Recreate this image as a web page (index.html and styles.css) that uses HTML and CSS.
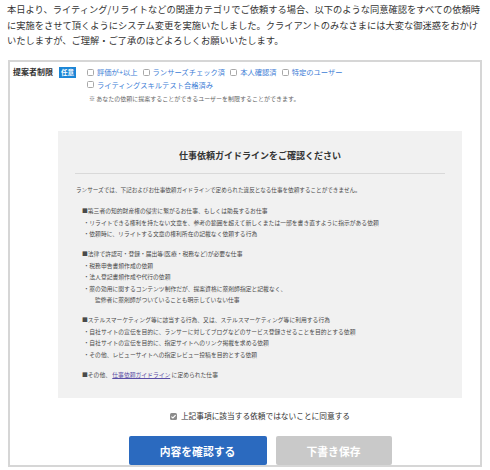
FILE: index.html
```html
<!DOCTYPE html>
<html lang="ja">
<head>
<meta charset="utf-8">
<title>仕事依頼ガイドライン</title>
<link rel="stylesheet" href="styles.css">
</head>
<body>
<p class="intro">本日より、ライティング/リライトなどの関連カテゴリでご依頼する場合、以下のような同意確認をすべての依頼時に実施をさせて頂くようにシステム変更を実施いたしました。クライアントのみなさまには大変な御迷惑をおかけいたしますが、ご理解・ご了承のほどよろしくお願いいたします。</p>

<div class="form-box">
  <div class="field-row">
    <span class="field-label">提案者制限</span>
    <span class="badge">任意</span>
    <div class="field-body">
      <div class="options">
        <label class="option"><span class="cb"></span>評価が+以上</label>
        <label class="option"><span class="cb"></span>ランサーズチェック済</label>
        <label class="option"><span class="cb"></span>本人確認済</label>
        <label class="option"><span class="cb"></span>特定のユーザー</label>
        <label class="option"><span class="cb"></span>ライティングスキルテスト合格済み</label>
      </div>
      <p class="note">※ あなたの依頼に提案することができるユーザーを制限することができます。</p>
    </div>
  </div>

  <div class="guide">
    <h2 class="guide-title">仕事依頼ガイドラインをご確認ください</h2>
    <p class="guide-lead">ランサーズでは、下記およびお仕事依頼ガイドラインで定められた違反となる仕事を依頼することができません。</p>

    <div class="section">
      <p class="sec-head">■第三者の知的財産権の侵害に繋がるお仕事、もしくは助長するお仕事</p>
      <p class="item">・リライトできる権利を持たない文章を、参考の範囲を超えて新しくまたは一部を書き直すように指示がある依頼</p>
      <p class="item">・依頼時に、リライトする文章の権利所在の記載なく依頼する行為</p>
    </div>

    <div class="section">
      <p class="sec-head">■法律で許認可・登録・届出等(医療・税務など)が必要な仕事</p>
      <p class="item">・税務申告書類作成の依頼</p>
      <p class="item">・法人登記書類作成や代行の依頼</p>
      <p class="item">・薬の効用に関するコンテンツ制作だが、提案資格に薬剤師指定と記載なく、</p>
      <p class="item cont">監修者に薬剤師がついていることも明示していない仕事</p>
    </div>

    <div class="section">
      <p class="sec-head">■ステルスマーケティング等に該当する行為、又は、ステルスマーケティング等に利用する行為</p>
      <p class="item">・自社サイトの宣伝を目的に、ランサーに対してブログなどのサービス登録させることを目的とする依頼</p>
      <p class="item">・自社サイトの宣伝を目的に、指定サイトへのリンク掲載を求める依頼</p>
      <p class="item">・その他、レビューサイトへの指定レビュー投稿を目的とする依頼</p>
    </div>

    <div class="section">
      <p class="sec-head">■その他、 <a class="guide-link" href="#">仕事依頼ガイドライン</a> に定められた仕事</p>
    </div>
  </div>

  <div class="agree">
    <span class="cb-checked"><svg viewBox="0 0 8 8" width="7" height="7"><path d="M1.6 4.1 L3.3 5.7 L6.4 2.3" fill="none" stroke="#fff" stroke-width="1.3"/></svg></span>
    <span>上記事項に該当する依頼ではないことに同意する</span>
  </div>

  <div class="actions">
    <button class="btn btn-primary" type="button">内容を確認する</button>
    <button class="btn btn-disabled" type="button">下書き保存</button>
  </div>
</div>
</body>
</html>
```

FILE: styles.css
```css
* { box-sizing: border-box; }

body {
  margin: 0;
  background: #fff;
  font-family: "Noto Sans CJK JP", "Noto Sans", sans-serif;
  color: #333;
}

.intro {
  margin: 0;
  padding: 2px 4px 0 7px;
  font-size: 9.25px;
  line-height: 15.5px;
  color: #333;
}

.form-box {
  margin: 11.5px 8px 0 8px;
  width: 474px;
  border: 2px solid #d6d6d6;
}

.field-row {
  display: flex;
  align-items: flex-start;
  padding: 4px 0 0 3px;
}

.field-label {
  width: 40px;
  font-size: 8px;
  font-weight: 700;
  line-height: 12.5px;
  color: #333;
  white-space: nowrap;
}

.badge {
  margin: 1px 0 0 6px;
  width: 17px;
  height: 11px;
  background: #1c86d6;
  color: #fff;
  font-size: 6.5px;
  font-weight: 700;
  line-height: 11px;
  text-align: center;
}

.field-body {
  margin-left: 11px;
}

.options {
  display: flex;
  flex-wrap: wrap;
  width: 285px;
  column-gap: 5px;
}

.option {
  display: flex;
  align-items: center;
  font-size: 7.3px;
  line-height: 12.5px;
  color: #3c7dd6;
  white-space: nowrap;
}

.cb {
  display: inline-block;
  width: 7px;
  height: 7px;
  margin-right: 3px;
  border: 1px solid #a8a8a8;
  border-radius: 1.5px;
  background: #fff;
}

.note {
  margin: 3px 0 0 2px;
  font-size: 6px;
  line-height: 10px;
  color: #666;
}

.guide {
  margin: 27px 0 0 48px;
  width: 404px;
  padding: 19px 17px 18px;
  background: #f1f1f1;
  color: #4a4a4a;
}

.guide-title {
  margin: 0;
  padding-bottom: 11px;
  border-bottom: 1px solid #d9d9d9;
  font-size: 9px;
  font-weight: 700;
  line-height: 12px;
  text-align: center;
  color: #333;
}

.guide-lead {
  margin: 11px 0 0 1px;
  font-size: 5.6px;
  line-height: 11.5px;
}

.section {
  margin-top: 8.5px;
  padding-left: 7px;
}

.section p {
  margin: 0;
  font-size: 5.8px;
  line-height: 11.5px;
  white-space: nowrap;
}

.item {
  padding-left: 1.5px;
}

.item.cont {
  padding-left: 13px;
}

.guide-link {
  color: #5b4ea6;
  text-decoration: underline;
}

.agree {
  display: flex;
  align-items: center;
  justify-content: center;
  gap: 4px;
  margin: 12px 0 0 48px;
  width: 404px;
  font-size: 7.7px;
  line-height: 12px;
  color: #333;
}

.cb-checked {
  display: inline-flex;
  align-items: center;
  justify-content: center;
  width: 7px;
  height: 7px;
  border-radius: 1.5px;
  background: #8c8c8c;
}

.cb-checked svg { display: block; }

.actions {
  display: flex;
  justify-content: center;
  gap: 9px;
  margin: 14px 0 0 48px;
  width: 404px;
}

.btn {
  height: 29px;
  border: 0;
  border-radius: 2px;
  font-family: inherit;
  font-size: 10.8px;
  font-weight: 700;
  color: #fff;
}

.btn-primary {
  width: 138px;
  background: #2b6abf;
}

.btn-disabled {
  width: 116px;
  background: #c9c9c9;
}
```
